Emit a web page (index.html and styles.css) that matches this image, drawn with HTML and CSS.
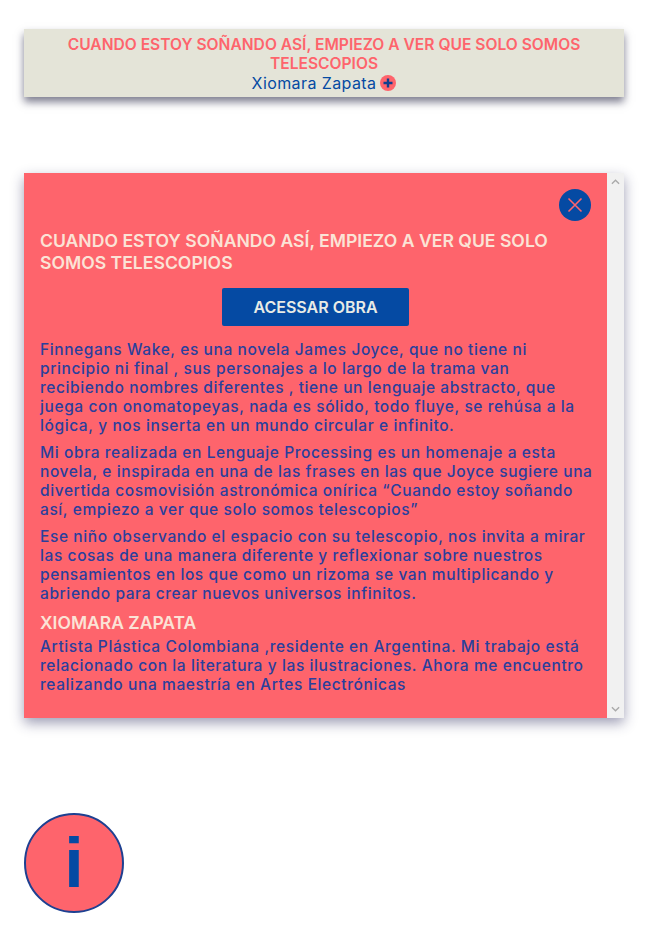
FILE: index.html
```html
<!DOCTYPE html>
<html lang="es">
<head>
<meta charset="utf-8">
<title>Cuando estoy soñando así</title>
<link rel="stylesheet" href="styles.css">
</head>
<body>
<main class="page">
  <header class="banner">
    <h2 class="banner-title">CUANDO ESTOY SOÑANDO ASÍ, EMPIEZO A VER QUE SOLO SOMOS TELESCOPIOS</h2>
    <div class="banner-author">Xiomara Zapata <span class="plus"><svg viewBox="0 0 16 16" width="16" height="16"><circle cx="8" cy="8" r="8" fill="#fe646c"/><path d="M8 3.500v9M3.500 8h9" stroke="#0f3f8f" stroke-width="2.400"/></svg></span></div>
  </header>
  <section class="modal">
    <div class="modal-content">
      <div class="close-row">
        <button class="close" aria-label="Cerrar"><svg viewBox="0 0 32 32" width="32" height="32"><circle cx="16" cy="16" r="16" fill="#054aa3"/><path d="M9.500 9.500l13 13M22.500 9.500l-13 13" stroke="#fe646c" stroke-width="1.600" fill="none"/></svg></button>
      </div>
      <h1 class="modal-title">CUANDO ESTOY SOÑANDO ASÍ, EMPIEZO A VER QUE SOLO SOMOS TELESCOPIOS</h1>
      <div class="action"><a class="cta">ACESSAR OBRA</a></div>
      <p>Finnegans Wake, es una novela James Joyce, que no tiene ni<br>principio ni final , sus personajes a lo largo de la trama van<br>recibiendo nombres diferentes , tiene un lenguaje abstracto, que<br>juega con onomatopeyas, nada es sólido, todo fluye, se rehúsa a la<br>lógica, y nos inserta en un mundo circular e infinito.</p>
      <p>Mi obra realizada en Lenguaje Processing es un homenaje a esta<br>novela, e inspirada en una de las frases en las que Joyce sugiere una<br>divertida cosmovisión astronómica onírica “Cuando estoy soñando<br>así, empiezo a ver que solo somos telescopios”</p>
      <p>Ese niño observando el espacio con su telescopio, nos invita a mirar<br>las cosas de una manera diferente y reflexionar sobre nuestros<br>pensamientos en los que como un rizoma se van multiplicando y<br>abriendo para crear nuevos universos infinitos.</p>
      <h3 class="author">XIOMARA ZAPATA</h3>
      <p>Artista Plástica Colombiana ,residente en Argentina. Mi trabajo está<br>relacionado con la literatura y las ilustraciones. Ahora me encuentro<br>realizando una maestría en Artes Electrónicas</p>
    </div>
    <div class="scrollbar">
      <svg viewBox="0 0 10 6" width="9" height="6"><path d="M1 5l4-4 4 4" fill="none" stroke="#a9a9a9" stroke-width="1.500"/></svg>
      <svg viewBox="0 0 10 6" width="9" height="6"><path d="M1 1l4 4 4-4" fill="none" stroke="#a9a9a9" stroke-width="1.500"/></svg>
    </div>
  </section>
  <button class="info" aria-label="Información">i</button>
</main>
</body>
</html>
```

FILE: styles.css
```css
* { box-sizing: border-box; }
html, body { margin: 0; background: #fff; }
body { font-family: "Inter", "DejaVu Sans", sans-serif; }
.page { width: 652px; height: 949px; padding: 29px 28px 0 24px; display: flex; flex-direction: column; overflow: hidden; }
.banner { width: 600px; height: 68px; background: #e4e4d8; box-shadow: 0 5px 8px rgba(40, 40, 70, .6); text-align: center; padding-top: 6px; }
.banner-title { margin: 0; font-size: 15.6px; line-height: 19px; font-weight: 600; color: #fe646c; }
.banner-author { font-size: 16px; line-height: 20px; color: #054aa3; letter-spacing: .4px; display: flex; justify-content: center; align-items: center; }
.plus { display: flex; margin-left: 4px; }
.modal { margin-top: 76px; width: 600px; height: 545px; display: flex; box-shadow: 0 5px 12px rgba(40, 40, 90, .45); flex: none; }
.modal-content { width: 583px; background: #fe646c; padding: 16px 16px 0; color: #2a3f9c; }
.close-row { display: flex; justify-content: flex-end; }
.close { width: 32px; height: 32px; padding: 0; border: 0; background: none; display: block; }
.close svg { display: block; }
.modal-title { margin: 9px 0 14px; font-size: 17.6px; line-height: 22px; font-weight: 600; color: #fbe3d6; }
.action { display: flex; justify-content: center; }
.cta { width: 187px; height: 38px; background: #054aa3; border-radius: 2px; color: #e8ebe6; font-size: 16px; font-weight: 600; display: flex; align-items: center; justify-content: center; }
.modal-content p { margin: 14px 0 8px; font-size: 15.5px; line-height: 19px; font-weight: 500; letter-spacing: .6px; white-space: nowrap; }
.modal-content p + p { margin-top: 8px; }
.author { margin: 9px 0 3px; font-size: 17.5px; line-height: 22px; font-weight: 600; color: #fbe3d6; }
.author + p { margin-top: 0; }
.scrollbar { width: 17px; background: #f1f1f1; display: flex; flex-direction: column; justify-content: space-between; align-items: center; padding: 6px 0; }
.info { margin-top: 95px; width: 100px; height: 100px; flex: none; border-radius: 50%; border: 2px solid #1e4091; background: #fe646c; color: #054aa3; font-family: "Liberation Sans", sans-serif; font-size: 70px; font-weight: 700; line-height: 1; padding: 0; }
```
